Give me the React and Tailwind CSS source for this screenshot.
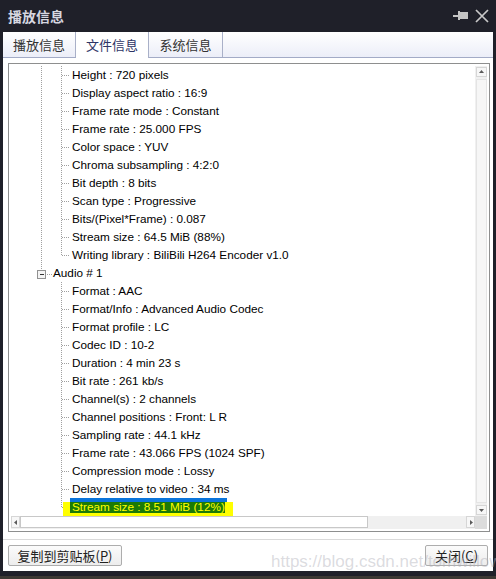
import React from "react";

const video = [
  "Height : 720 pixels",
  "Display aspect ratio : 16:9",
  "Frame rate mode : Constant",
  "Frame rate : 25.000 FPS",
  "Color space : YUV",
  "Chroma subsampling : 4:2:0",
  "Bit depth : 8 bits",
  "Scan type : Progressive",
  "Bits/(Pixel*Frame) : 0.087",
  "Stream size : 64.5 MiB (88%)",
  "Writing library : BiliBili H264 Encoder v1.0",
];

const audio = [
  "Format : AAC",
  "Format/Info : Advanced Audio Codec",
  "Format profile : LC",
  "Codec ID : 10-2",
  "Duration : 4 min 23 s",
  "Bit rate : 261 kb/s",
  "Channel(s) : 2 channels",
  "Channel positions : Front: L R",
  "Sampling rate : 44.1 kHz",
  "Frame rate : 43.066 FPS (1024 SPF)",
  "Compression mode : Lossy",
  "Delay relative to video : 34 ms",
  "Stream size : 8.51 MiB (12%)",
];

const DOT = "#a0a0a0";

function Guides({ l0, last }) {
  return (
    <svg width="39" height="18" className="shrink-0 block" shapeRendering="crispEdges">
      {l0 && <line x1="10.5" y1="0" x2="10.5" y2="18" stroke={DOT} strokeDasharray="1 1" />}
      <line x1="30.5" y1="0" x2="30.5" y2={last ? 10 : 18} stroke={DOT} strokeDasharray="1 1" />
      <line x1="31" y1="9.5" x2="40" y2="9.5" stroke={DOT} strokeDasharray="1 1" />
    </svg>
  );
}

function ChildRow({ text, l0, last, selected }) {
  return (
    <div className="flex h-[18px] pl-[20px] items-stretch">
      <Guides l0={l0} last={last} />
      {selected ? (
        <span className="relative px-[2px] leading-[18px] whitespace-nowrap">
          <span className="absolute inset-0 bg-[#0a74da]" />
          <span className="absolute left-[-7px] top-[4px] w-[170px] h-[16px] bg-[#ffff00]" />
          <span className="absolute left-0 right-[2px] top-[4px] h-[11px] bg-[#1c7a06]" />
          <span className="relative text-[#ffff00]">{text}</span>
        </span>
      ) : (
        <span className="px-[2px] leading-[18px] whitespace-nowrap text-black">{text}</span>
      )}
    </div>
  );
}

function AudioRow() {
  return (
    <div className="flex h-[18px] pl-[20px] items-stretch">
      <svg width="22" height="18" className="shrink-0 block" shapeRendering="crispEdges">
        <line x1="10.5" y1="0" x2="10.5" y2="6" stroke={DOT} strokeDasharray="1 1" />
        <rect x="6.5" y="6.5" width="8" height="8" fill="#f4f4f4" stroke="#919191" />
        <line x1="8.5" y1="10.5" x2="12.5" y2="10.5" stroke="#333" />
        <line x1="16" y1="10.5" x2="22" y2="10.5" stroke={DOT} strokeDasharray="1 1" />
      </svg>
      <span className="leading-[18px] whitespace-nowrap text-black">Audio # 1</span>
    </div>
  );
}

function Arrow({ dir }) {
  const pts = {
    up: "2,5 7,5 4.5,2",
    down: "2,3 7,3 4.5,6",
    left: "5,2 5,7 2,4.5",
    right: "3,2 3,7 6,4.5",
  }[dir];
  return (
    <svg width="9" height="9" className="block">
      <polygon points={pts} fill="#5a5a5a" />
    </svg>
  );
}

export default function App() {
  return (
    <div className="relative w-[496px] h-[579px] bg-[#1f2029] flex flex-col overflow-hidden font-['Noto_Sans_CJK_SC',sans-serif]">
      {/* Title bar */}
      <div className="h-[32px] shrink-0 flex items-center pl-[8px] pr-[7px]">
        <span className="text-[14px] font-bold text-[#d6d7e0] leading-none">播放信息</span>
        <div className="ml-auto flex items-center gap-[7px]">
          <svg width="15" height="10" className="block">
            <rect x="0" y="4" width="6" height="2" fill="#c4c4c4" />
            <rect x="5" y="0" width="2" height="9" fill="#c4c4c4" />
            <rect x="7" y="1" width="8" height="7" fill="#c4c4c4" />
          </svg>
          <svg width="14" height="14" className="block">
            <path d="M1 1 L13 13 M13 1 L1 13" stroke="#c8c8c8" strokeWidth="1.7" />
          </svg>
        </div>
      </div>

      {/* Window body */}
      <div className="mx-[3px] h-[539px] shrink-0 bg-white flex flex-col">
        {/* Tabs */}
        <div className="h-[26px] shrink-0 flex bg-gradient-to-b from-white to-[#eceef8] border-b border-[#a3abc6]">
          <div className="w-[73px] flex items-center justify-center border-r border-[#a9b0c8] text-[13px] text-[#333]">
            播放信息
          </div>
          <div className="w-[73px] h-[26px] -mb-px flex items-center justify-center border-r border-[#a9b0c8] bg-white text-[13px] text-[#2e3566]">
            文件信息
          </div>
          <div className="w-[74px] flex items-center justify-center border-r border-[#a9b0c8] text-[13px] text-[#333]">
            系统信息
          </div>
        </div>

        {/* Tree box */}
        <div className="ml-[5px] mr-[3px] mt-[5px] h-[469px] shrink-0 border border-[#8e8f8f] p-[2px] flex flex-col">
          <div className="flex-1 flex min-h-0">
            <div className="flex-1 overflow-hidden text-[11.75px] font-['Liberation_Sans',Arial,sans-serif]">
              {video.map((t, i) => (
                <ChildRow key={"v" + i} text={t} l0 last={i === video.length - 1} />
              ))}
              <AudioRow />
              {audio.map((t, i) => (
                <ChildRow
                  key={"a" + i}
                  text={t}
                  l0={false}
                  last={i === audio.length - 1}
                  selected={i === audio.length - 1}
                />
              ))}
            </div>
            {/* vertical scrollbar */}
            <div className="w-[12px] shrink-0 bg-[#f0f0f0] flex flex-col items-center py-[1px]">
              <div className="w-[11px] h-[10px] border border-[#d6d6d6] bg-[#f7f7f7] flex items-center justify-center">
                <Arrow dir="up" />
              </div>
              <div className="flex-1 w-[11px] my-[2px] border border-[#e4e4e4] bg-[#f6f6f6]" />
              <div className="w-[11px] h-[10px] border border-[#d6d6d6] bg-[#f7f7f7] flex items-center justify-center">
                <Arrow dir="down" />
              </div>
            </div>
          </div>
          {/* horizontal scrollbar */}
          <div className="h-[13px] shrink-0 flex bg-[#f0f0f0]">
            <div className="w-[9px] h-[12px] border border-[#d6d6d6] bg-[#f7f7f7] flex items-center justify-center">
              <Arrow dir="left" />
            </div>
            <div className="w-[348px] h-[12px] border border-[#c8c8c8] bg-white" />
            <div className="flex-1" />
            <div className="w-[9px] h-[12px] border border-[#d6d6d6] bg-[#f7f7f7] flex items-center justify-center">
              <Arrow dir="right" />
            </div>
            <div className="w-[12px] bg-[#dcdcdc]" />
          </div>
        </div>

        {/* separator */}
        <div className="mt-[7px] h-px bg-[#dadada] shrink-0" />

        {/* Buttons */}
        <div className="mt-[5px] px-[5px] flex justify-between">
          <button className="w-[114px] h-[21px] border border-[#adadad] rounded-[2px] bg-gradient-to-b from-[#fbfbfb] to-[#ededed] text-[13px] text-[#222] leading-none flex items-center justify-center">
            复制到剪贴板(<span className="underline">P</span>)
          </button>
          <button className="w-[63px] h-[21px] border border-[#adadad] rounded-[2px] bg-gradient-to-b from-[#fbfbfb] to-[#ededed] text-[13px] text-[#222] leading-none flex items-center justify-center">
            关闭(<span className="underline">C</span>)
          </button>
        </div>
      </div>

      <div className="flex-1" />
      <div className="h-[3px] bg-[#3c3833] shrink-0" />

      {/* watermark */}
      <div className="absolute left-[271px] top-[553px] text-[17px] leading-none text-[rgba(175,175,185,0.45)] font-['Liberation_Sans',Arial,sans-serif] whitespace-nowrap pointer-events-none">
        https://blog.csdn.net/tomwillow
      </div>
    </div>
  );
}
